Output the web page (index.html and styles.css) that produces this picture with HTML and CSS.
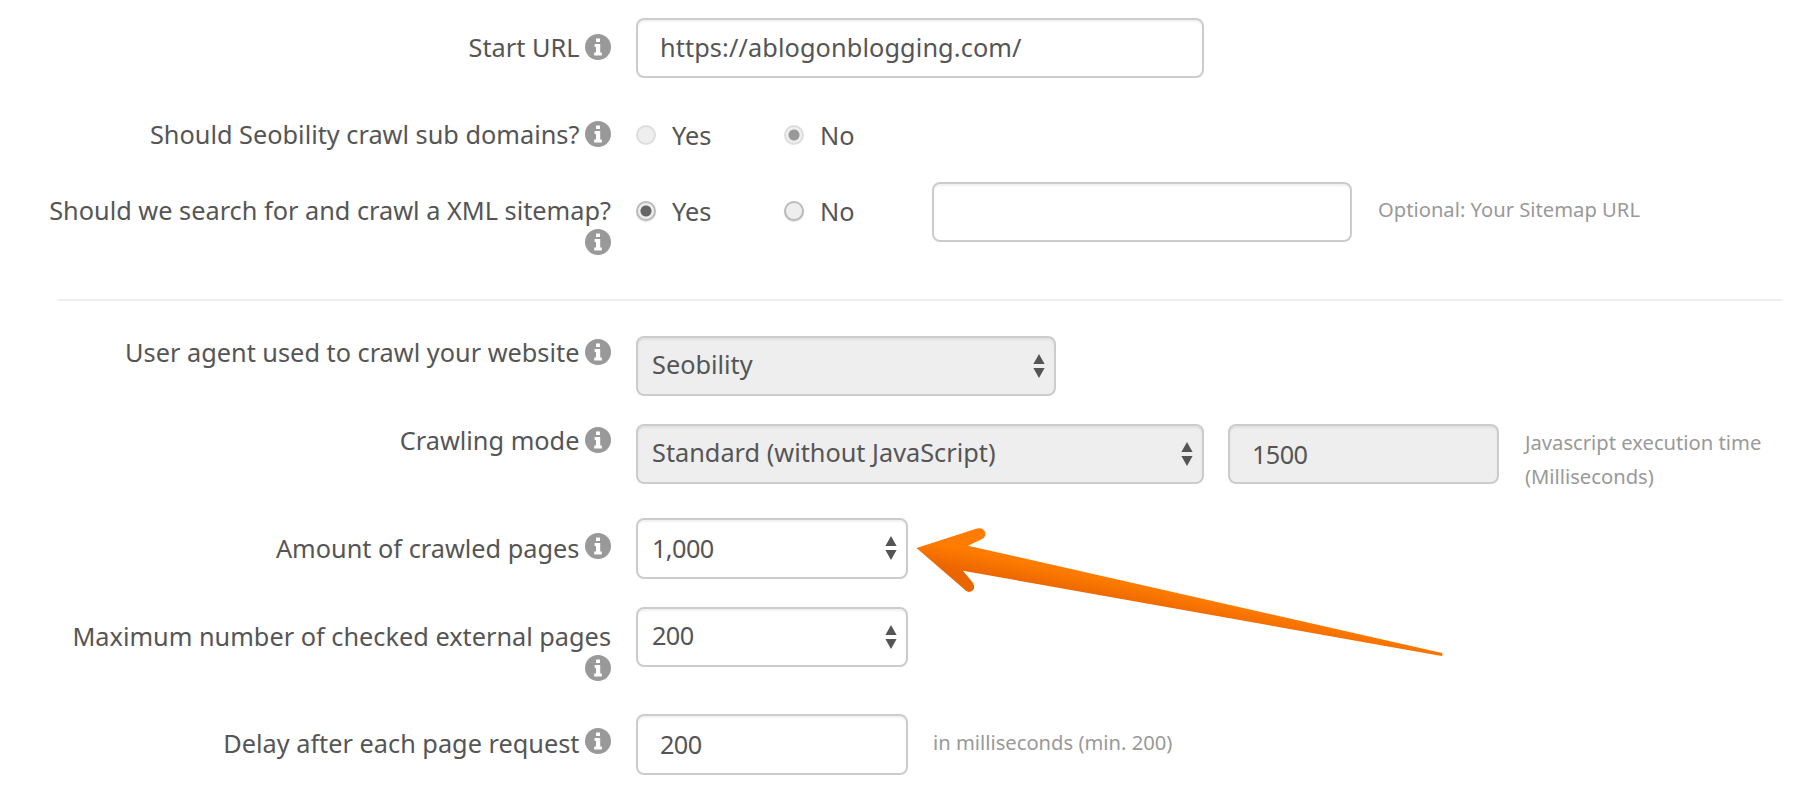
FILE: index.html
```html
<!DOCTYPE html>
<html lang="en">
<head>
<meta charset="utf-8">
<title>Crawler settings</title>
<link rel="stylesheet" href="styles.css">
</head>
<body>
<svg class="defs" width="0" height="0" aria-hidden="true">
  <symbol id="info" viewBox="0 0 26 26">
    <circle cx="13" cy="13" r="13" fill="#999"/>
    <path fill="#fff" d="M11 4.5h4v3.6h-4zM9.6 10h5.6v8.4h1.6v3H9.2v-3h1.8v-5.4H9.6z"/>
  </symbol>
  <symbol id="updown" viewBox="0 0 12 24">
    <path fill="#555" d="M6 0l5.6 10H.4zM.4 14h11.2L6 24z"/>
  </symbol>
</svg>
<form class="form">
  <div class="row row-url">
    <label class="label">Start URL <svg class="info"><use href="#info"/></svg></label>
    <div class="control"><input class="input input-wide input-url" type="text" value="https://ablogonblogging.com/"></div>
  </div>
  <div class="row row-sub">
    <label class="label">Should Seobility crawl sub domains? <svg class="info"><use href="#info"/></svg></label>
    <div class="control radios">
      <span class="radio-item"><input class="radio" type="radio" name="sub" disabled> Yes</span>
      <span class="radio-item"><input class="radio" type="radio" name="sub" checked disabled> No</span>
    </div>
  </div>
  <div class="row row-sitemap">
    <label class="label">Should we search for and crawl a XML sitemap? <svg class="info"><use href="#info"/></svg></label>
    <div class="control radios">
      <span class="radio-item"><input class="radio" type="radio" name="map" checked> Yes</span>
      <span class="radio-item"><input class="radio" type="radio" name="map"> No</span>
      <input class="input input-sitemap" type="text">
      <span class="help help-sitemap">Optional: Your Sitemap URL</span>
    </div>
  </div>
  <hr class="rule">
  <div class="row row-agent">
    <label class="label">User agent used to crawl your website <svg class="info"><use href="#info"/></svg></label>
    <div class="control"><div class="select-wrap select-mid"><select class="select is-off"><option>Seobility</option></select><svg class="updown"><use href="#updown"/></svg></div></div>
  </div>
  <div class="row row-mode">
    <label class="label">Crawling mode <svg class="info"><use href="#info"/></svg></label>
    <div class="control">
      <div class="select-wrap select-wide"><select class="select is-off"><option>Standard (without JavaScript)</option></select><svg class="updown"><use href="#updown"/></svg></div>
      <input class="input input-time is-off num" type="text" value="1500">
      <span class="help help-time">Javascript execution time<br>(Milliseconds)</span>
    </div>
  </div>
  <div class="row row-amount">
    <label class="label">Amount of crawled pages <svg class="info"><use href="#info"/></svg></label>
    <div class="control"><div class="select-wrap select-small"><select class="select num"><option>1,000</option></select><svg class="updown"><use href="#updown"/></svg></div></div>
  </div>
  <div class="row row-external">
    <label class="label">Maximum number of checked external pages <svg class="info"><use href="#info"/></svg></label>
    <div class="control"><div class="select-wrap select-small"><select class="select num"><option>200</option></select><svg class="updown"><use href="#updown"/></svg></div></div>
  </div>
  <div class="row row-delay">
    <label class="label">Delay after each page request <svg class="info"><use href="#info"/></svg></label>
    <div class="control">
      <input class="input input-small num" type="text" value="200">
      <span class="help help-delay">in milliseconds (min. 200)</span>
    </div>
  </div>
</form>
<svg class="arrow" viewBox="0 0 1808 788" aria-hidden="true">
  <defs>
    <linearGradient id="arrowfill" gradientUnits="userSpaceOnUse" x1="955" y1="535" x2="948" y2="569">
      <stop offset="0" stop-color="#ff7c00"/>
      <stop offset="0.35" stop-color="#ff7c00"/>
      <stop offset="1" stop-color="#ea6400"/>
    </linearGradient>
  </defs>
  <path fill="url(#arrowfill)" d="M916.5 548 L977 528.5 Q983 527 985 532 Q986 537 982 539 L968 545.7 L1442 653 Q1443.5 655 1441.5 656 L963 570.7 L973 583 Q976 589 971 591.5 Q967 593 964 589 Z"/>
</svg>
</body>
</html>
```
FILE: styles.css
```css
html, body { margin: 0; padding: 0; background: #fff; height: 788px; overflow: hidden; }
body { font-family: "Noto Sans", "Open Sans", sans-serif; font-size: 25.3px; color: #555; position: relative; }
.defs { position: absolute; }
.form { padding: 18px 26px 0 58px; }
.row { display: grid; grid-template-columns: 554px 1fr; column-gap: 24px; }
.label { text-align: right; line-height: 32px; padding: 13px 1px 0 0; margin-left: -12px; }
.info { width: 26px; height: 26px; vertical-align: -3px; margin-left: -1px; }
.control { display: flex; align-items: flex-start; }
.radios { align-items: center; }
.input, .select { box-sizing: border-box; height: 60px; border: 2px solid #ccc; border-radius: 8px; background: #fff; color: #555; font: inherit; box-shadow: inset 0 2px 2px rgba(0,0,0,.06); outline: none; }
.input { padding: 0 22px 3px; }
.input-url { letter-spacing: .1px; }
.num { letter-spacing: -.6px; }
.is-off { background-color: #eee; }
.input-wide { width: 568px; }
.input-sitemap { width: 420px; }
.input-time { width: 271px; margin-left: 24px; padding: 0 22px; }
.input-small { width: 272px; height: 61px; padding: 0 22px 2px; }
.select { width: 100%; appearance: none; -webkit-appearance: none; padding: 0 40px 4px 14px; }
.select-wrap { position: relative; }
.select-mid { width: 420px; }
.select-wide { width: 568px; }
.select-small { width: 272px; }
.updown { position: absolute; right: 11px; top: 18px; width: 12px; height: 24px; }
.help { font-size: 20.2px; color: #999; line-height: 34px; }
.help-sitemap { margin-left: 26px; margin-top: -7px; }
.help-time { margin-left: 26px; margin-top: 1px; }
.help-delay { margin-left: 25px; margin-top: 11px; }
.radio-item { display: inline-flex; align-items: center; gap: 16px; width: 148px; }
.radio { appearance: none; -webkit-appearance: none; box-sizing: border-box; width: 20px; height: 20px; margin: 0; border-radius: 50%; border: 2px solid #bbb; background: #eee; box-shadow: 0 1px 1px rgba(0,0,0,.15); }
.radio:checked { background: radial-gradient(circle, #666 0 5px, #eee 6px); }
.radio:disabled { border-color: #ddd; box-shadow: none; }
.radio:disabled:checked { background: radial-gradient(circle, #999 0 5px, #eee 6px); }
.row-url { height: 60px; margin-bottom: 27px; }
.row-sub { height: 60px; }
.row-sub .control { height: 60px; }
.row-sitemap { height: 60px; margin-top: 17px; }
.row-sitemap .label { padding-top: 12px; }
.row-sitemap .control { height: 60px; }
.row-sitemap .radio-item { margin-top: -3px; }
.rule { border: 0; border-top: 2px solid #eee; margin: 57px 0 35px; }
.row-agent { height: 60px; margin-bottom: 28px; }
.row-agent .label, .row-mode .label { padding-top: 0; }
.row-mode { height: 60px; margin-bottom: 34px; }
.row-amount { height: 61px; margin-bottom: 28px; }
.row-amount .label { padding-top: 14px; }
.row-amount .info, .row-delay .info { vertical-align: -1px; }
.row-amount .select { height: 61px; padding-bottom: 2px; }
.row-external { height: 60px; margin-bottom: 47px; }
.row-delay { height: 61px; }
.arrow { position: absolute; left: 0; top: 0; width: 1808px; height: 788px; pointer-events: none; }
```
